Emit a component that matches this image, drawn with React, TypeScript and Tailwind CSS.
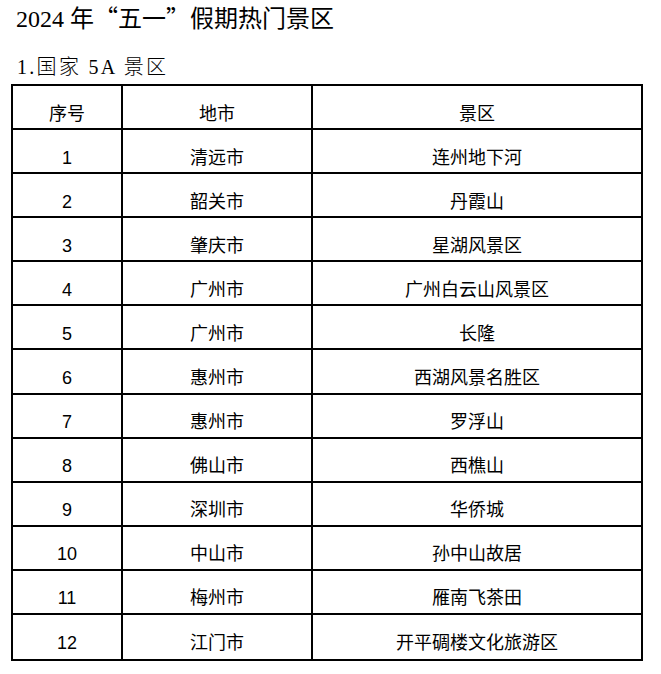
import React from "react";

const rows: [string, string, string][] = [
  ["1", "清远市", "连州地下河"],
  ["2", "韶关市", "丹霞山"],
  ["3", "肇庆市", "星湖风景区"],
  ["4", "广州市", "广州白云山风景区"],
  ["5", "广州市", "长隆"],
  ["6", "惠州市", "西湖风景名胜区"],
  ["7", "惠州市", "罗浮山"],
  ["8", "佛山市", "西樵山"],
  ["9", "深圳市", "华侨城"],
  ["10", "中山市", "孙中山故居"],
  ["11", "梅州市", "雁南飞茶田"],
  ["12", "江门市", "开平碉楼文化旅游区"],
];

function Row({ cells, last }: { cells: [string, string, string]; last?: boolean }) {
  return (
    <div className={"grid grid-cols-[108px_2px_188px_2px_1fr] " + (last ? "" : "border-b-2 border-black")}>
      <div className="flex items-center justify-center pt-[14px]">{cells[0]}</div>
      <div className="bg-black" />
      <div className="flex items-center justify-center pt-[14px]">{cells[1]}</div>
      <div className="bg-black" />
      <div className="flex items-center justify-center pt-[14px]">{cells[2]}</div>
    </div>
  );
}

export default function App() {
  return (
    <div className="w-[661px] h-[674px] bg-white text-black overflow-hidden">
      <div
        className="pl-[16px] pt-[2px] h-[40px] text-[24px] leading-[30px] whitespace-pre"
        style={{ fontFamily: '"Liberation Serif", "Noto Sans CJK SC", serif' }}
      >
        2024 年<span style={{ fontFamily: '"Noto Sans CJK SC", sans-serif' }}>“五一”假期热门景区</span>
      </div>
      <div
        className="pl-[17px] pt-[13px] h-[44px] text-[20px] leading-[28px] tracking-[2.3px] whitespace-pre font-light"
        style={{ fontFamily: '"Liberation Serif", "Noto Sans CJK SC", serif' }}
      >
        1.国家 5A 景区
      </div>
      <div
        className="ml-[11px] w-[632px] h-[577px] border-2 border-black grid grid-rows-13 text-[18px]"
        style={{ fontFamily: '"Liberation Sans", "Noto Sans CJK SC", sans-serif' }}
      >
        <Row cells={["序号", "地市", "景区"]} />
        {rows.map((r, i) => (
          <Row key={i} cells={r} last={i === rows.length - 1} />
        ))}
      </div>
    </div>
  );
}
